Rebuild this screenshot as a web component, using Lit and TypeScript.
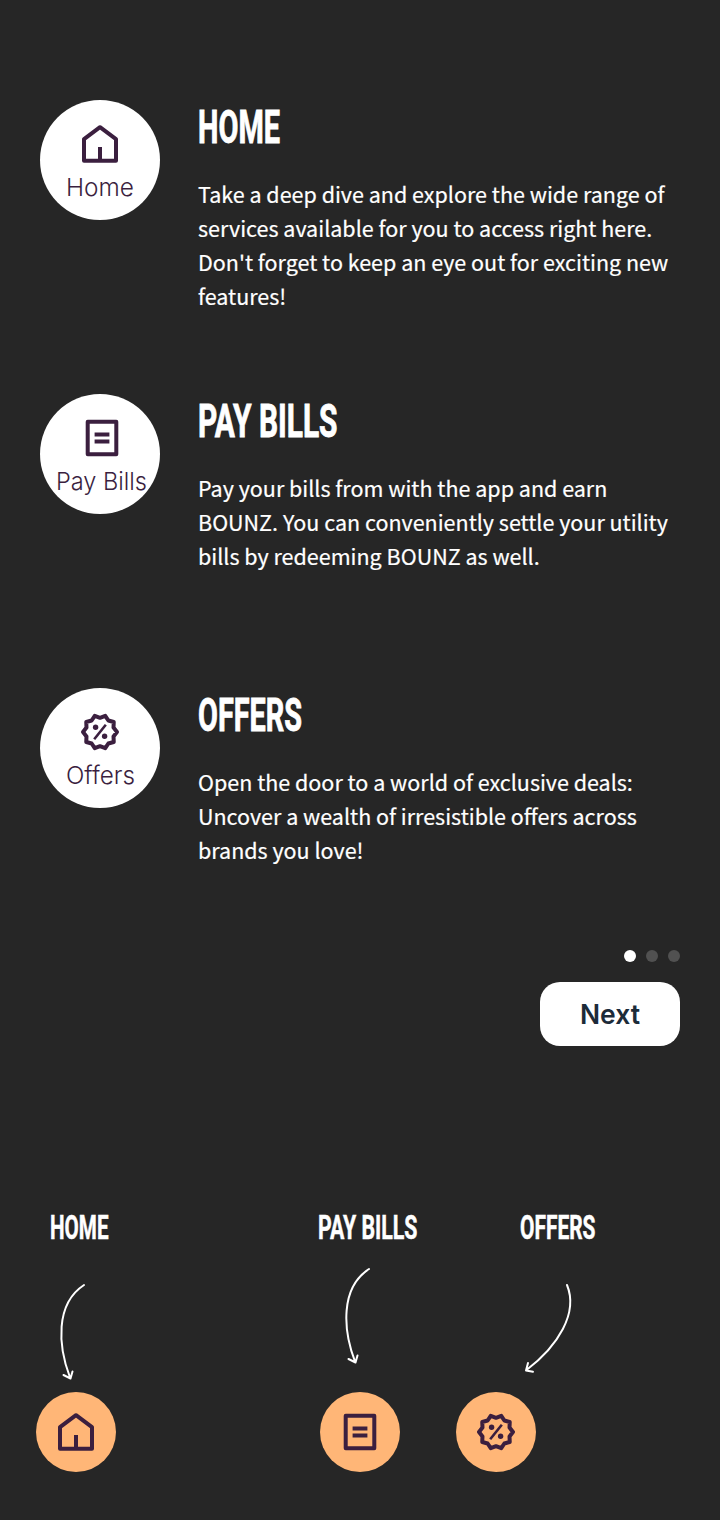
import { LitElement, html, svg, css } from "lit";
import { customElement, property } from "lit/decorators.js";

type IconName = "home" | "bills" | "offers";

const badgePoints = Array.from({ length: 20 }, (_, i) => {
  const r = i % 2 === 0 ? 17 : 14.2;
  const a = (i * Math.PI) / 10;
  return `${(20 + r * Math.cos(a)).toFixed(2)},${(20 + r * Math.sin(a)).toFixed(2)}`;
}).join(" ");

const shapes = {
  home: svg`<path d="M4 15.1 20 3.2 36 15.1V36.7H4ZM20 23V36" />`,
  bills: svg`<path d="M5.7 3.8H34.3V36.2H5.7ZM12.6 16.4H27.4M12.6 23.6H27.4" />`,
  offers: svg`<polygon points=${badgePoints} />
    <path d="M14.2 27.3 25.8 12.8" stroke-width="2.6" />
    <circle class="dot" cx="15.6" cy="15.3" r="2.7" />
    <circle class="dot" cx="24.6" cy="24.3" r="2.7" />`,
};

@customElement("nav-icon")
class NavIcon extends LitElement {
  @property() name: IconName = "home";
  static styles = css`
    :host { display: block; width: 40px; height: 40px; }
    svg { display: block; fill: none; stroke: #3b1f3f; stroke-width: 4; stroke-linejoin: round; }
    .dot { fill: #3b1f3f; stroke: none; }
  `;
  render() {
    return html`<svg width="40" height="40" viewBox="0 0 40 40">${shapes[this.name]}</svg>`;
  }
}

/* Single line of text set to an exact width, baseline at the bottom of its box. */
@customElement("fit-text")
class FitText extends LitElement {
  @property() text = "";
  @property({ type: Number }) width = 100;
  @property({ type: Number }) height = 40;
  @property({ type: Number }) weight = 0;
  static styles = css`
    :host { display: block; }
    svg { display: block; overflow: visible; fill: currentColor; stroke: currentColor; }
  `;
  render() {
    return html`<svg width=${this.width} height=${this.height} stroke-width=${this.weight}>
      <text x="0" y=${this.height} textLength=${this.width} lengthAdjust="spacingAndGlyphs">${this.text}</text>
    </svg>`;
  }
}

const sections = [
  { icon: "home", label: "Home", labelWidth: 68, title: "HOME", titleWidth: 82, cls: "",
    lines: ["Take a deep dive and explore the wide range of", "services available for you to access right here.", "Don't forget to keep an eye out for exciting new", "features!"] },
  { icon: "bills", label: "Pay Bills", labelWidth: 91, title: "PAY BILLS", titleWidth: 139.5, cls: "wide",
    lines: ["Pay your bills from with the app and earn", "BOUNZ. You can conveniently settle your utility", "bills by redeeming BOUNZ as well."] },
  { icon: "offers", label: "Offers", labelWidth: 69, title: "OFFERS", titleWidth: 104, cls: "",
    lines: ["Open the door to a world of exclusive deals:", "Uncover a wealth of irresistible offers across", "brands you love!"] },
];

const pointers = [
  { icon: "home", title: "HOME", width: 58.5, cls: "home",
    d: "M48 34C19 53 22 95 34 126.5M27.5 124 34.5 127.5 36.5 120.5" },
  { icon: "bills", title: "PAY BILLS", width: 99.5, cls: "bills",
    d: "M49 18C20 37 23 79 35 110.5M28.5 108 35.5 111.5 37.5 104.5" },
  { icon: "offers", title: "OFFERS", width: 75.5, cls: "offers",
    d: "M111 34C122.5 62 102 95 70.5 119M72 112 70 119.5 77 120.8" },
];

@customElement("app-root")
class AppRoot extends LitElement {
  static styles = css`
    :host { display: block; box-sizing: border-box; width: 720px; height: 1520px; background: #262626; color: #fff; padding: 100px 40px 0; overflow: hidden; }
    .row { display: grid; grid-template-columns: 158px 1fr; height: 294px; }
    .bubble { box-sizing: border-box; width: 120px; height: 120px; border-radius: 50%; background: #fff; padding-top: 24px; display: flex; flex-direction: column; align-items: center; color: #3b1f3f; font: 300 24.5px Inter, sans-serif; }
    .wide { padding-left: 3px; }
    .title { padding: 9px 0 0; font: 700 47px Roboto, sans-serif; }
    .copy { margin: 34px 0 0; font: 400 21.5px/34px "Noto Sans CJK JP", sans-serif; white-space: nowrap; -webkit-text-stroke: 0.2px #fff; }
    .line { display: block; }
    .controls { display: flex; flex-direction: column; align-items: flex-end; margin-top: -32px; gap: 20px; }
    .dots { display: flex; gap: 10px; }
    .dot { width: 12px; height: 12px; border-radius: 50%; background: #515151; }
    .on { background: #fff; }
    .next { width: 140px; height: 64px; border: 0; padding: 22px 1px 0 0; border-radius: 20px; background: #fff; color: #1c2b39; display: flex; justify-content: center; box-sizing: border-box; font: 600 27.5px Inter, sans-serif; }
    .pointers { display: grid; grid-template-columns: 284px 136px 200px; margin: 169px 0 0 -4px; }
    .small { font: 700 33.5px Roboto, sans-serif; }
    .small.home { padding-left: 14px; }
    .small.bills { margin-left: -2px; }
    .small.offers { padding-left: 64px; }
    .arrow { display: block; margin-top: 12px; fill: none; stroke: #fff; stroke-width: 2; stroke-linecap: round; stroke-linejoin: round; overflow: visible; }
    .disc { width: 80px; height: 80px; border-radius: 50%; background: #ffb677; display: grid; place-items: center; }
  `;
  render() {
    return html`
      ${sections.map((s) => html`<section class="row">
        <div class="bubble ${s.cls}">
          <nav-icon name=${s.icon}></nav-icon>
          <fit-text text=${s.label} width=${s.labelWidth} height="32"></fit-text>
        </div>
        <div>
          <fit-text class="title" text=${s.title} width=${s.titleWidth} height="34" weight="0.9"></fit-text>
          <p class="copy">${s.lines.map((l) => html`<span class="line">${l}</span>`)}</p>
        </div>
      </section>`)}
      <div class="controls">
        <div class="dots"><span class="dot on"></span><span class="dot"></span><span class="dot"></span></div>
        <button class="next"><fit-text text="Next" width="60" height="20"></fit-text></button>
      </div>
      <div class="pointers">
        ${pointers.map((p) => html`<div>
          <fit-text class="small ${p.cls}" text=${p.title} width=${p.width} height="24" weight="0.5"></fit-text>
          <svg class="arrow" width="136" height="141" viewBox="0 0 136 141"><path d=${p.d} /></svg>
          <div class="disc"><nav-icon name=${p.icon}></nav-icon></div>
        </div>`)}
      </div>`;
  }
}
